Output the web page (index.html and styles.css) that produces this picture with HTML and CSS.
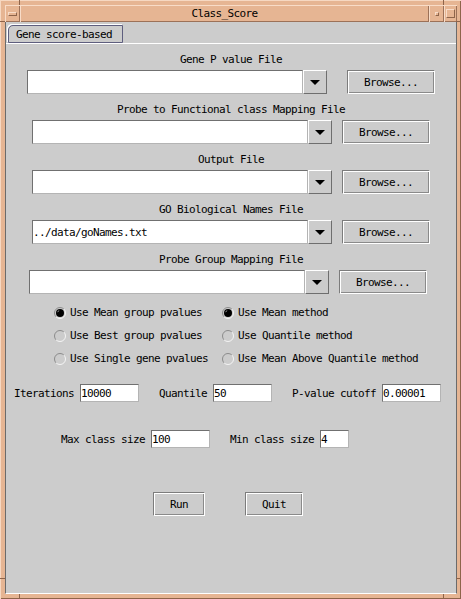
FILE: index.html
```html
<!DOCTYPE html>
<html>
<head>
<meta charset="utf-8">
<title>Class_Score</title>
<link rel="stylesheet" href="styles.css">
</head>
<body>
<div class="frame">
  <span class="mark mv mt ml"></span>
  <span class="mark mv mt mr"></span>
  <span class="mark mh sl st"></span>
  <span class="mark mh sr st"></span>
  <span class="mark mh sl sb"></span>
  <span class="mark mh sr sb"></span>
  <span class="mark mv mb ml"></span>
  <span class="mark mv mb mr"></span>

  <div class="titlebar">
    <div class="tb-btn tb-menu"><span class="menu-bar"></span></div>
    <div class="tb-title">Class_Score</div>
    <div class="tb-btn tb-min"><span class="min-dot"></span></div>
    <div class="tb-btn tb-max"><span class="max-box"></span></div>
  </div>

  <div class="content">
    <div class="tabs"><div class="tab">Gene score-based</div></div>
    <div class="panel">

      <div class="section">
        <div class="label">Gene P value File</div>
        <div class="filerow r-wide">
          <div class="field"></div>
          <div class="drop"><span class="tri"></span></div>
          <div class="btn browse">Browse...</div>
        </div>
      </div>

      <div class="section">
        <div class="label">Probe to Functional class Mapping File</div>
        <div class="filerow r-std">
          <div class="field"></div>
          <div class="drop"><span class="tri"></span></div>
          <div class="btn browse">Browse...</div>
        </div>
      </div>

      <div class="section">
        <div class="label">Output File</div>
        <div class="filerow r-std">
          <div class="field"></div>
          <div class="drop"><span class="tri"></span></div>
          <div class="btn browse">Browse...</div>
        </div>
      </div>

      <div class="section">
        <div class="label">GO Biological Names File</div>
        <div class="filerow r-std">
          <div class="field">../data/goNames.txt</div>
          <div class="drop"><span class="tri"></span></div>
          <div class="btn browse">Browse...</div>
        </div>
      </div>

      <div class="section last">
        <div class="label">Probe Group Mapping File</div>
        <div class="filerow r-left">
          <div class="field"></div>
          <div class="drop"><span class="tri"></span></div>
          <div class="btn browse">Browse...</div>
        </div>
      </div>

      <div class="radios">
        <div class="radio">
          <svg class="rb" viewBox="0 0 12 12" width="12" height="12"><path d="M2.1 9.9 A5.5 5.5 0 0 1 9.9 2.1" fill="none" stroke="#8c8c8c"/><path d="M9.9 2.1 A5.5 5.5 0 0 1 2.1 9.9" fill="none" stroke="#f4f4f4"/><circle cx="6" cy="6" r="4" fill="#000"/><path d="M3.6 5.2 A2.6 2.6 0 0 1 5.2 3.6" fill="none" stroke="#9a9a9a"/></svg>
          <span>Use Mean group pvalues</span>
        </div>
        <div class="radio">
          <svg class="rb" viewBox="0 0 12 12" width="12" height="12"><path d="M2.1 9.9 A5.5 5.5 0 0 1 9.9 2.1" fill="none" stroke="#8c8c8c"/><path d="M9.9 2.1 A5.5 5.5 0 0 1 2.1 9.9" fill="none" stroke="#f4f4f4"/><circle cx="6" cy="6" r="4" fill="#000"/><path d="M3.6 5.2 A2.6 2.6 0 0 1 5.2 3.6" fill="none" stroke="#9a9a9a"/></svg>
          <span>Use Mean method</span>
        </div>
        <div class="radio">
          <svg class="rb" viewBox="0 0 12 12" width="12" height="12"><path d="M2.1 9.9 A5.5 5.5 0 0 1 9.9 2.1" fill="none" stroke="#8c8c8c"/><path d="M9.9 2.1 A5.5 5.5 0 0 1 2.1 9.9" fill="none" stroke="#f4f4f4"/></svg>
          <span>Use Best group pvalues</span>
        </div>
        <div class="radio">
          <svg class="rb" viewBox="0 0 12 12" width="12" height="12"><path d="M2.1 9.9 A5.5 5.5 0 0 1 9.9 2.1" fill="none" stroke="#8c8c8c"/><path d="M9.9 2.1 A5.5 5.5 0 0 1 2.1 9.9" fill="none" stroke="#f4f4f4"/></svg>
          <span>Use Quantile method</span>
        </div>
        <div class="radio">
          <svg class="rb" viewBox="0 0 12 12" width="12" height="12"><path d="M2.1 9.9 A5.5 5.5 0 0 1 9.9 2.1" fill="none" stroke="#8c8c8c"/><path d="M9.9 2.1 A5.5 5.5 0 0 1 2.1 9.9" fill="none" stroke="#f4f4f4"/></svg>
          <span>Use Single gene pvalues</span>
        </div>
        <div class="radio">
          <svg class="rb" viewBox="0 0 12 12" width="12" height="12"><path d="M2.1 9.9 A5.5 5.5 0 0 1 9.9 2.1" fill="none" stroke="#8c8c8c"/><path d="M9.9 2.1 A5.5 5.5 0 0 1 2.1 9.9" fill="none" stroke="#f4f4f4"/></svg>
          <span>Use Mean Above Quantile method</span>
        </div>
      </div>

      <div class="fields f1">
        <div class="group"><span class="flabel">Iterations</span><div class="num">10000</div></div>
        <div class="group"><span class="flabel">Quantile</span><div class="num">50</div></div>
        <div class="group"><span class="flabel">P-value cutoff</span><div class="num">0.00001</div></div>
      </div>

      <div class="fields f2">
        <div class="group"><span class="flabel">Max class size</span><div class="num">100</div></div>
        <div class="group"><span class="flabel">Min class size</span><div class="num small">4</div></div>
      </div>

      <div class="actions">
        <div class="btn run">Run</div>
        <div class="btn quit">Quit</div>
      </div>

    </div>
  </div>
</div>
</body>
</html>
```

FILE: styles.css
```css
html, body {
  margin: 0;
  padding: 0;
}

body {
  background: #e6b593;
  font-family: "DejaVu Sans Mono", "Liberation Mono", monospace;
  font-size: 11px;
  letter-spacing: -0.62px;
  color: #000;
}

.frame {
  position: relative;
  width: 461px;
  height: 599px;
  box-sizing: border-box;
  padding: 5px 4px 5px 5px;
  background: #e6b593;
  display: flex;
  flex-direction: column;
  box-shadow: inset 1px 1px 0 #f6d8c2, inset -1px -1px 0 #8e644a;
}

/* frame resize-corner marks */
.mark {
  position: absolute;
  background: #8e644a;
}
.mv { width: 1px; height: 5px; }
.mh { width: 5px; height: 1px; }
.mt { top: 0; }
.mb { bottom: 0; }
.mv.ml { left: 19px; }
.mv.mr { left: 443px; }
.sl { left: 0; }
.sr { right: 0; }
.st { top: 21px; }
.sb { top: 578px; }

/* title bar */
.titlebar {
  display: flex;
  height: 17px;
  flex: none;
}

.tb-btn,
.tb-title {
  box-shadow: inset 1px 1px 0 #f8dcc8, inset -1px -1px 0 #9c7158;
}

.tb-btn {
  display: flex;
  align-items: center;
  justify-content: center;
}

.tb-menu { width: 15px; }
.tb-title {
  flex: 1;
  text-align: center;
  line-height: 18px;
}
.tb-min { width: 15px; }
.tb-max { width: 13px; }

.menu-bar {
  width: 7px;
  height: 2px;
  background: #e6b593;
  border: 1px solid;
  border-color: #f8dcc8 #8e644a #8e644a #f8dcc8;
}

.min-dot {
  width: 2px;
  height: 2px;
  background: #e6b593;
  border: 1px solid;
  border-color: #f8dcc8 #8e644a #8e644a #f8dcc8;
}

.max-box {
  width: 7px;
  height: 7px;
  background: #e6b593;
  border: 1px solid;
  border-color: #f8dcc8 #8e644a #8e644a #f8dcc8;
}

/* content area */
.content {
  flex: 1;
  background: #cccccc;
  border-left: 1px solid #6b6b6b;
  border-right: 1px solid #6b6b6b;
  border-bottom: 1px solid #ffffff;
  display: flex;
  flex-direction: column;
}

.tabs {
  display: flex;
  padding: 3px 0 0 2px;
  height: 18px;
}

.tab {
  width: 115px;
  height: 18px;
  box-sizing: border-box;
  border: 1px solid #5e5e7e;
  border-top-left-radius: 5px;
  box-shadow: -1px -1px 0 #ffffff;
  padding-left: 7px;
  line-height: 17px;
}

.panel {
  flex: 1;
  border-top: 1px solid #ffffff;
  padding-top: 9px;
}

.section {
  margin-bottom: 9px;
}
.section.last {
  margin-bottom: 0;
}

.label {
  text-align: center;
  height: 12px;
  line-height: 13px;
  margin-bottom: 5px;
}

.filerow {
  display: flex;
  height: 24px;
}
.r-wide { padding-left: 21px; }
.r-std { padding-left: 26px; }
.r-left { padding-left: 23px; }

.field {
  width: 276px;
  height: 24px;
  box-sizing: border-box;
  background: #ffffff;
  border: 1px solid;
  border-color: #707070 #b4b4b4 #b4b4b4 #707070;
  line-height: 24px;
  white-space: nowrap;
  overflow: hidden;
}

.drop {
  width: 24px;
  height: 24px;
  box-sizing: border-box;
  background: #cccccc;
  border: 1px solid;
  border-color: #ffffff #6e6e6e #6e6e6e #ffffff;
  display: flex;
  align-items: center;
  justify-content: center;
}

.tri {
  width: 0;
  height: 0;
  border-left: 5px solid transparent;
  border-right: 5px solid transparent;
  border-top: 5px solid #000000;
}

.btn {
  height: 24px;
  box-sizing: border-box;
  background: #cccccc;
  border: 1px solid;
  border-color: #7c7c7c #ffffff #ffffff #7c7c7c;
  box-shadow: inset 1px 1px 0 #ffffff, inset -1px -1px 0 #8a8a8a;
  text-align: center;
  line-height: 24px;
}

.browse {
  width: 88px;
}
.r-wide .browse { margin-left: 20px; }
.r-std .browse,
.r-left .browse { margin-left: 10px; }

/* radios */
.radios {
  margin-top: 7px;
  padding-left: 48px;
  display: grid;
  grid-template-columns: 168px auto;
  grid-auto-rows: 23px;
}

.radio {
  display: flex;
  align-items: center;
}

.rb {
  flex: none;
  margin-right: 4px;
}

/* numeric fields */
.fields {
  display: flex;
  align-items: center;
  height: 18px;
}
.f1 {
  margin-top: 14px;
  padding-left: 8px;
}
.f2 {
  margin-top: 28px;
  padding-left: 55px;
}

.group {
  display: flex;
  align-items: center;
  margin-right: 20px;
}

.flabel {
  margin-right: 6px;
  white-space: nowrap;
}

.num {
  width: 59px;
  height: 18px;
  box-sizing: border-box;
  background: #ffffff;
  border: 1px solid;
  border-color: #707070 #b4b4b4 #b4b4b4 #707070;
  line-height: 17px;
  white-space: nowrap;
  overflow: hidden;
}
.num.small {
  width: 29px;
}

/* action buttons */
.actions {
  display: flex;
  margin-top: 44px;
  padding-left: 147px;
}
.run {
  width: 52px;
}
.quit {
  width: 58px;
  margin-left: 40px;
}
```
